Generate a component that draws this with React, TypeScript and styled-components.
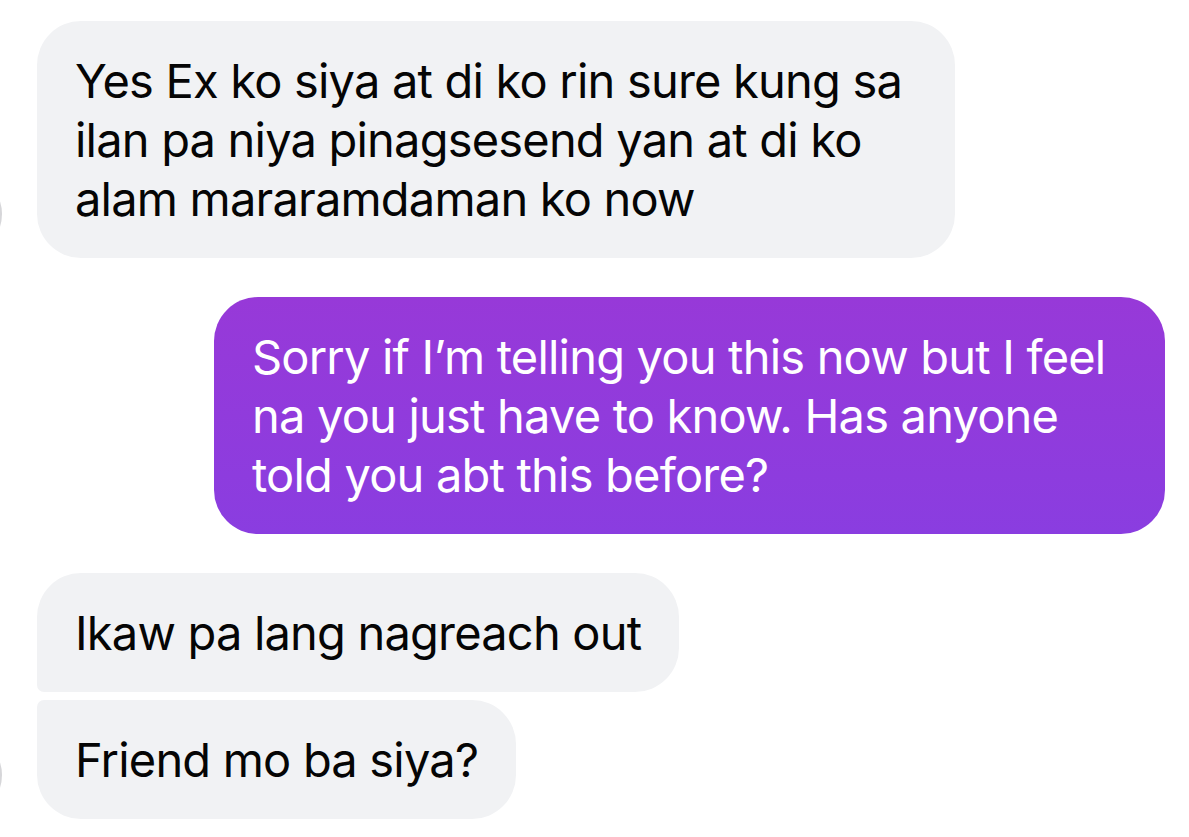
import styled, { createGlobalStyle } from 'styled-components'

const GlobalStyle = createGlobalStyle`
  html, body {
    margin: 0;
    padding: 0;
    background: #ffffff;
    overflow: hidden;
  }
  body {
    font-family: Inter, "Noto Sans", "Liberation Sans", sans-serif;
  }
`

type Msg = { lines: string[] }

const thread = [
  {
    from: 'them',
    messages: [
      {
        lines: [
          'Yes Ex ko siya at di ko rin sure kung sa',
          'ilan pa niya pinagsesend yan at di ko',
          'alam mararamdaman ko now',
        ],
      },
    ],
    width: 918,
  },
  {
    from: 'me',
    messages: [
      {
        lines: [
          'Sorry if I\u2019m telling you this now but I feel',
          'na you just have to know. Has anyone',
          'told you abt this before?',
        ],
      },
    ],
    width: 951,
  },
  {
    from: 'them',
    messages: [{ lines: ['Ikaw pa lang nagreach out'] }, { lines: ['Friend mo ba siya?'] }],
  },
]

function radiusFor(from: string, index: number, count: number) {
  const big = 44
  const small = 7
  if (count === 1) return `${big}px`
  const first = index === 0
  const last = index === count - 1
  if (from === 'them') {
    const tl = first ? big : small
    const bl = last ? big : small
    return `${tl}px ${big}px ${big}px ${bl}px`
  }
  const tr = first ? big : small
  const br = last ? big : small
  return `${big}px ${tr}px ${br}px ${big}px`
}

export default function App() {
  return (
    <>
      <GlobalStyle />
      <Thread>
        {thread.map((group, gi) => (
          <Group key={gi} $mine={group.from === 'me'}>
            {group.from === 'them' && (
              <AvatarSlot>
                <Avatar />
              </AvatarSlot>
            )}
            <Stack $mine={group.from === 'me'}>
              {group.messages.map((m: Msg, i) => (
                <Bubble
                  key={i}
                  $mine={group.from === 'me'}
                  $radius={radiusFor(group.from, i, group.messages.length)}
                  $width={group.width}
                >
                  {m.lines.map((line, li) => (
                    <Line key={li}>{line}</Line>
                  ))}
                </Bubble>
              ))}
            </Stack>
          </Group>
        ))}
      </Thread>
    </>
  )
}

const Thread = styled.div`
  display: flex;
  flex-direction: column;
  gap: 39px;
  padding: 21px 24px 0 0;
  width: 1189px;
  height: 837px;
  box-sizing: border-box;
`

const Group = styled.div<{ $mine: boolean }>`
  display: flex;
  align-items: flex-end;
  justify-content: ${(p) => (p.$mine ? 'flex-end' : 'flex-start')};
`

const AvatarSlot = styled.div`
  width: 37px;
  flex-shrink: 0;
  display: flex;
  align-items: flex-end;
  overflow: hidden;
`

const Avatar = styled.div`
  width: 84px;
  height: 84px;
  flex-shrink: 0;
  margin-left: -82px;
  margin-bottom: 2px;
  border-radius: 50%;
  background: #d6d6d9;
`

const Stack = styled.div<{ $mine: boolean }>`
  display: flex;
  flex-direction: column;
  align-items: ${(p) => (p.$mine ? 'flex-end' : 'flex-start')};
  gap: 8px;
`

const Bubble = styled.div<{ $mine: boolean; $radius: string; $width?: number }>`
  box-sizing: border-box;
  width: ${(p) => (p.$width ? `${p.$width}px` : 'auto')};
  padding: 30px 38px 30px 38px;
  border-radius: ${(p) => p.$radius};
  background: ${(p) =>
    p.$mine ? 'linear-gradient(180deg, #9739d8 0%, #8a3de0 100%)' : '#f1f2f4'};
  color: ${(p) => (p.$mine ? '#ffffff' : '#050505')};
  font-size: 47px;
  line-height: 59px;
  letter-spacing: -0.8px;
`

const Line = styled.div`
  white-space: nowrap;
`
